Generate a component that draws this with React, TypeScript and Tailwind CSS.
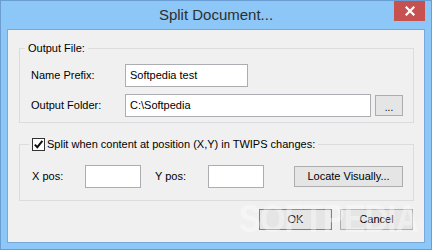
import React from "react"

const font = "font-['Liberation_Sans',Arial,sans-serif]"

function CloseGlyph() {
  return (
    <svg width="10" height="10" viewBox="0 0 10 10">
      <path d="M1.5 1.5 L8.5 8.5 M8.5 1.5 L1.5 8.5" stroke="#fff" strokeWidth="2.2" strokeLinecap="square" />
    </svg>
  )
}

function CheckBox() {
  return (
    <span className="flex h-[13px] w-[13px] items-center justify-center border border-[#333] bg-white">
      <svg width="11" height="11" viewBox="0 0 11 11">
        <path d="M1.8 5.6 L4.3 8.2 L9.4 1.8" fill="none" stroke="#111" strokeWidth="2" />
      </svg>
    </span>
  )
}

function TextBox({ w, value }: { w: string; value?: string }) {
  return (
    <div className={`${w} flex h-[23px] items-center border border-[#abadb3] bg-white pl-[4px] text-black`}>
      {value}
    </div>
  )
}

function Button({ w, h, children, primary }: { w: string; h: string; children: React.ReactNode; primary?: boolean }) {
  return (
    <button
      className={`${w} ${h} flex items-center justify-center border bg-[#e5e5e5] text-black ${
        primary ? "border-[#3c90e0]" : "border-[#adadad]"
      }`}
    >
      {children}
    </button>
  )
}

export default function App() {
  return (
    <div className={`relative flex h-[250px] w-[432px] flex-col border border-[#6a9ed3] bg-[#8cc7f7] ${font} text-[11px] text-black`}>
      {/* Title bar */}
      <div className="relative flex h-[28px] items-center justify-center">
        <span className="text-[15px] text-[#2e2e2e]">Split Document...</span>
        <div className="absolute right-[6px] top-0 flex h-[20px] w-[31px] items-center justify-center bg-[#c75050]">
          <CloseGlyph />
        </div>
      </div>

      {/* Client */}
      <div className="mx-[6px] flex h-[214px] flex-col border border-[#78a8d8] bg-[#f0f0f0] pt-[18px]">
        {/* Output File */}
        <div className="relative ml-[11px] h-[75px] w-[395px] border border-[#dcdcdc] pl-[11px] pt-[15px]">
          <span className="absolute -top-[7px] left-[5px] bg-[#f0f0f0] px-[3px] leading-[13px]">Output File:</span>
          <div className="flex flex-col gap-[7px]">
            <div className="flex items-center">
              <span className="w-[94px]">Name Prefix:</span>
              <TextBox w="w-[123px]" value="Softpedia test" />
            </div>
            <div className="flex items-center">
              <span className="w-[94px]">Output Folder:</span>
              <TextBox w="w-[246px]" value="C:\Softpedia" />
              <div className="ml-[4px]">
                <Button w="w-[28px]" h="h-[21px]">
                  <span className="pt-[3px] text-[10px]">...</span>
                </Button>
              </div>
            </div>
          </div>
        </div>

        {/* Split group */}
        <div className="relative ml-[11px] mt-[21px] h-[57px] w-[395px] border border-[#dcdcdc] pl-[12px] pt-[20px]">
          <div className="absolute -top-[7px] left-[9px] flex items-center gap-[2px] bg-[#f0f0f0] px-[3px] leading-[13px]">
            <CheckBox />
            <span>Split when content at position (X,Y) in TWIPS changes:</span>
          </div>
          <div className="flex items-center">
            <span className="w-[53px]">X pos:</span>
            <TextBox w="w-[56px]" />
            <span className="ml-[14px] w-[53px]">Y pos:</span>
            <TextBox w="w-[56px]" />
            <div className="ml-[30px]">
              <Button w="w-[109px]" h="h-[21px]">Locate Visually...</Button>
            </div>
          </div>
        </div>

        {/* Dialog buttons */}
        <div className="mt-[8px] flex justify-end gap-[8px] pr-[11px]">
          <Button w="w-[73px]" h="h-[21px]" primary>OK</Button>
          <Button w="w-[73px]" h="h-[21px]">Cancel</Button>
        </div>
      </div>

      {/* watermark */}
      <span className="pointer-events-none absolute left-[238px] top-[199px] origin-left scale-x-[0.86] text-[38px] font-bold leading-none tracking-[-1px] text-white/40">
        SOFTPEDIA<sup className="text-[9px] font-normal">®</sup>
      </span>
    </div>
  )
}
